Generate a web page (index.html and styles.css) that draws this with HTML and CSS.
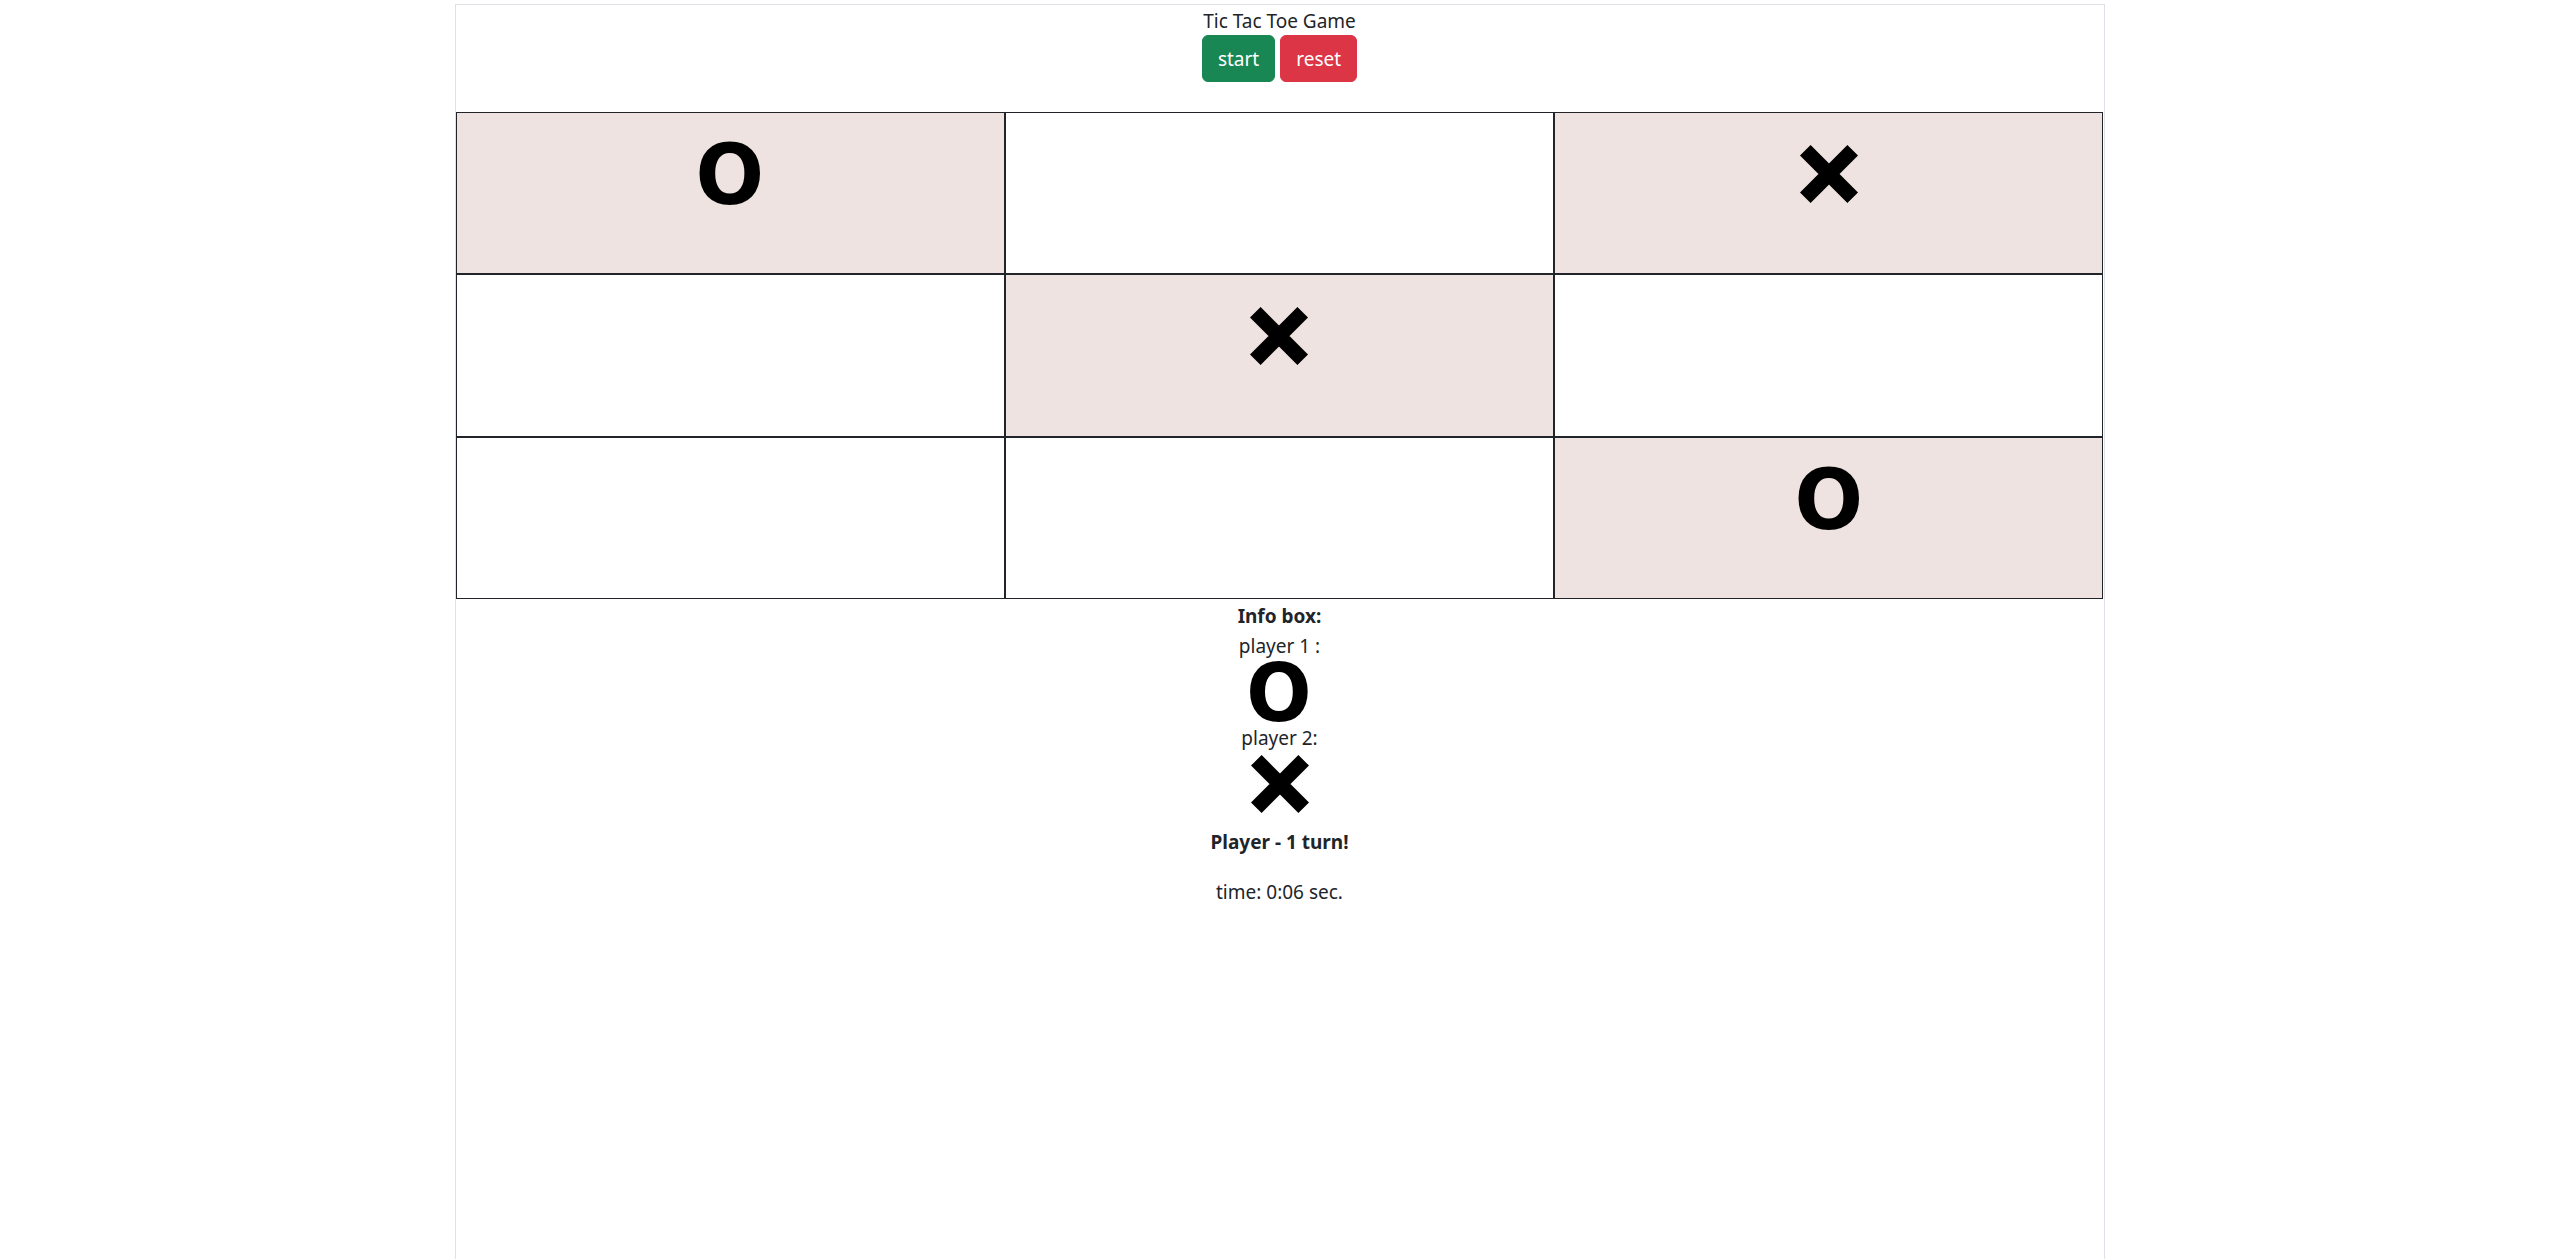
FILE: index.html
```html
<!DOCTYPE html>
<html lang="en">
<head>
<meta charset="utf-8">
<title>Tic Tac Toe Game</title>
<link rel="stylesheet" href="styles.css">
</head>
<body>
<div class="page">
  <header class="head">
    <div class="title">Tic Tac Toe Game</div>
    <div class="actions">
      <button class="btn btn-start">start</button>
      <button class="btn btn-reset">reset</button>
    </div>
  </header>

  <div class="board">
    <div class="cell filled"><span class="mark-o">O</span></div>
    <div class="cell"></div>
    <div class="cell filled"><svg class="mark-x" viewBox="0 0 58 58" width="58" height="58"><path d="M5.3 5.3L52.7 52.7M52.7 5.3L5.3 52.7" stroke="#000" stroke-width="15"/></svg></div>
    <div class="cell"></div>
    <div class="cell filled"><svg class="mark-x" viewBox="0 0 58 58" width="58" height="58"><path d="M5.3 5.3L52.7 52.7M52.7 5.3L5.3 52.7" stroke="#000" stroke-width="15"/></svg></div>
    <div class="cell"></div>
    <div class="cell"></div>
    <div class="cell"></div>
    <div class="cell filled"><span class="mark-o">O</span></div>
  </div>

  <section class="info">
    <div class="info-title">Info box:</div>
    <div class="player">player 1 :</div>
    <div class="info-mark"><span class="mark-o small">O</span></div>
    <div class="player">player 2:</div>
    <div class="info-mark x"><svg class="mark-x" viewBox="0 0 58 58" width="58" height="58"><path d="M5.3 5.3L52.7 52.7M52.7 5.3L5.3 52.7" stroke="#000" stroke-width="15"/></svg></div>
    <p class="turn">Player - 1 turn!</p>
    <p class="time">time: 0:06 sec.</p>
  </section>
</div>
</body>
</html>
```

FILE: styles.css
```css
* { box-sizing: border-box; }

html, body {
  margin: 0;
  padding: 0;
  background: #fff;
}

body {
  font-family: "Noto Sans", "Open Sans", sans-serif;
  font-size: 19px;
  line-height: 30px;
  color: #212529;
  overflow: hidden;
}

.page {
  width: 1650px;
  height: calc(100vh - 4px);
  margin: 4px auto 0;
  border: 1px solid #dee2e6;
  border-bottom: 0;
  position: relative;
  left: 1px;
}

.head {
  display: flex;
  flex-direction: column;
  align-items: center;
  margin-bottom: 30px;
}

.title { padding-top: 1px; margin-bottom: -1px; }

.actions {
  display: flex;
  gap: 5px;
}

.btn {
  font: inherit;
  line-height: 30px;
  padding: 7.5px 15px;
  border: 1px solid transparent;
  border-radius: 6px;
  color: #fff;
  cursor: pointer;
}

.btn-start { background: #198754; border-color: #198754; }
.btn-reset { background: #dc3545; border-color: #dc3545; }

.board {
  display: grid;
  grid-template-columns: repeat(3, 1fr);
}

.cell {
  height: 162.4px;
  border: 1px solid #212529;
  background: #fff;
  display: flex;
  justify-content: center;
  align-items: flex-start;
  padding-top: 20px;
}

.cell.filled { background: #eee3e1; }

.mark-o {
  display: block;
  font-family: "DejaVu Sans", sans-serif;
  font-weight: bold;
  font-size: 84px;
  line-height: 84px;
  color: #000;
  transform: scaleX(0.96);
}

.cell .mark-x { margin-top: 12px; }

.info {
  text-align: center;
  padding-top: 2px;
}

.info-title { font-weight: bold; }

.info-mark {
  display: flex;
  justify-content: center;
  height: 62px;
}

.mark-o.small {
  font-size: 80px;
  line-height: 66px;
  height: 62px;
}

.info-mark.x {
  height: 74px;
  padding-top: 2px;
}

.turn {
  font-weight: bold;
  margin: 0 0 20px;
}

.time { margin: 0; }
```
